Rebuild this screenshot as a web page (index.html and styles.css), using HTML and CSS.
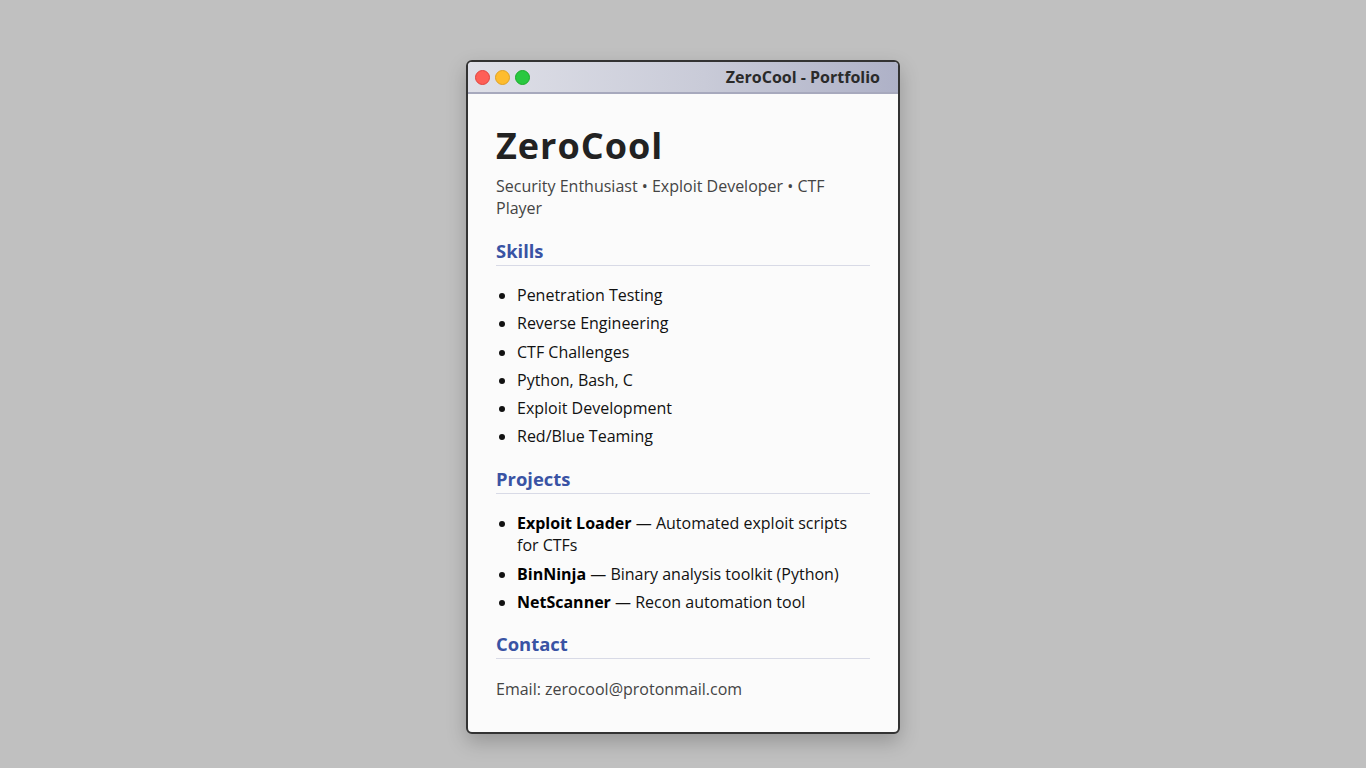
FILE: index.html
```html
<!DOCTYPE html>
<html lang="en">
<head>
<meta charset="utf-8">
<title>ZeroCool - Portfolio</title>
<link rel="stylesheet" href="styles.css">
</head>
<body>
<div class="window">
  <div class="titlebar">
    <div class="dots">
      <span class="dot red"></span>
      <span class="dot yellow"></span>
      <span class="dot green"></span>
    </div>
    <div class="title">ZeroCool - Portfolio</div>
  </div>
  <div class="content">
    <h1 class="name">ZeroCool</h1>
    <p class="tagline">Security Enthusiast • Exploit Developer • CTF Player</p>

    <h2 class="section">Skills</h2>
    <ul class="list">
      <li>Penetration Testing</li>
      <li>Reverse Engineering</li>
      <li>CTF Challenges</li>
      <li>Python, Bash, C</li>
      <li>Exploit Development</li>
      <li>Red/Blue Teaming</li>
    </ul>

    <h2 class="section">Projects</h2>
    <ul class="list">
      <li><strong>Exploit Loader</strong> — Automated exploit scripts for CTFs</li>
      <li><strong>BinNinja</strong> — Binary analysis toolkit (Python)</li>
      <li><strong>NetScanner</strong> — Recon automation tool</li>
    </ul>

    <h2 class="section section-last">Contact</h2>
    <p class="contact">Email: zerocool@protonmail.com</p>
  </div>
</div>
</body>
</html>
```
FILE: styles.css
```css
html, body {
  margin: 0;
  padding: 0;
}
body {
  background: #c0c0c0;
  font-family: "Open Sans", "Liberation Sans", sans-serif;
  font-size: 16px;
  line-height: 1.39;
  display: flex;
  justify-content: center;
  align-items: flex-start;
  padding-top: 60px;
  min-height: 708px;
}
.window {
  width: 430px;
  border: 2px solid #333;
  border-radius: 6px;
  background: #fbfbfb;
  overflow: hidden;
  box-shadow: 0 8px 20px rgba(0, 0, 0, 0.22);
}
.titlebar {
  height: 30px;
  display: flex;
  align-items: center;
  justify-content: space-between;
  padding: 0 18px 0 7px;
  background: linear-gradient(90deg, #dfe0e8 0%, #c9cbd8 55%, #aeb1c7 100%);
  border-bottom: 2px solid #a7a9bd;
}
.dots {
  display: flex;
  gap: 5px;
}
.dot {
  width: 15px;
  height: 15px;
  border-radius: 50%;
  box-sizing: border-box;
}
.red { background: #fe5f57; border: 1px solid #e0443e; }
.yellow { background: #febc2e; border: 1px solid #dea123; }
.green { background: #29c840; border: 1px solid #1aab29; }
.title {
  font-weight: 700;
  font-size: 16px;
  color: #2a2a2a;
}
.content {
  padding: 30px 28px 32px;
}
.name {
  margin: 0;
  font-size: 36px;
  line-height: 1.2;
  font-weight: 700;
  letter-spacing: 1px;
  color: #222;
}
.tagline {
  margin: 8px 0 0;
  color: #444;
}
.section {
  margin: 19px 0 0;
  font-size: 18.4px;
  line-height: 1.25;
  font-weight: 700;
  color: #3953a4;
  padding-bottom: 3.5px;
  border-bottom: 1px solid #d8dae6;
}
.section-last {
  margin-top: 18.5px;
}
.list {
  margin: 18px 0 0;
  padding-left: 21px;
  color: #111;
}
.list li {
  margin-bottom: 6px;
}
.list li:last-child {
  margin-bottom: 0;
}
.list strong {
  font-weight: 700;
  color: #000;
}
.contact {
  margin: 19px 0 0;
  color: #444;
}
```
